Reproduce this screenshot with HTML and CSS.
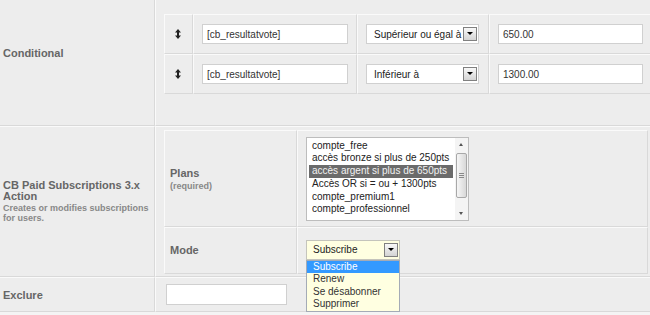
FILE: index.html
```html
<!DOCTYPE html>
<html lang="fr">
<head>
    <meta charset="UTF-8">
    <meta name="viewport" content="width=device-width, initial-scale=1.0">
    <title>CB Auto Actions</title>
    <link rel="stylesheet" href="styles.css">
</head>
<body>
    <div class="adminform">
        <div class="key key-cond">Conditional</div>
        <div class="value value-cond">
            <div class="conditions">
                <div class="cell handle">
                    <svg width="6" height="10" viewBox="0 0 6 10"><path d="M3 0 L6 3.5 H4 V6.5 H6 L3 10 L0 6.5 H2 V3.5 H0 Z" fill="#222"/></svg>
                </div>
                <div class="cell"><input class="inputbox field" type="text" value="[cb_resultatvote]"></div>
                <div class="cell"><div class="select op"><span>Supérieur ou égal à</span><i class="arrow"></i></div></div>
                <div class="cell"><input class="inputbox amount" type="text" value="650.00"></div>

                <div class="cell handle">
                    <svg width="6" height="10" viewBox="0 0 6 10"><path d="M3 0 L6 3.5 H4 V6.5 H6 L3 10 L0 6.5 H2 V3.5 H0 Z" fill="#222"/></svg>
                </div>
                <div class="cell"><input class="inputbox field" type="text" value="[cb_resultatvote]"></div>
                <div class="cell"><div class="select op"><span>Inférieur à</span><i class="arrow"></i></div></div>
                <div class="cell"><input class="inputbox amount" type="text" value="1300.00"></div>
            </div>
        </div>

        <div class="key key-action">
            <div class="title">CB Paid Subscriptions 3.x Action</div>
            <div class="desc">Creates or modifies subscriptions for users.</div>
        </div>
        <div class="value value-action">
            <div class="params">
                <div class="cell label">
                    <div class="title">Plans</div>
                    <div class="desc">(required)</div>
                </div>
                <div class="cell">
                    <div class="listbox">
                        <ul class="options">
                            <li>compte_free</li>
                            <li>accès bronze si plus de 250pts</li>
                            <li class="selected">accès argent si plus de 650pts</li>
                            <li>Accès OR si = ou + 1300pts</li>
                            <li>compte_premium1</li>
                            <li>compte_professionnel</li>
                        </ul>
                        <div class="scrollbar">
                            <div class="sb-btn up"></div>
                            <div class="sb-track"><div class="sb-thumb"></div></div>
                            <div class="sb-btn down"></div>
                        </div>
                    </div>
                </div>
                <div class="cell label">
                    <div class="title">Mode</div>
                </div>
                <div class="cell">
                    <div class="select mode">
                        <span>Subscribe</span><i class="arrow"></i>
                        <ul class="popup">
                            <li class="active">Subscribe</li>
                            <li>Renew</li>
                            <li>Se désabonner</li>
                            <li>Supprimer</li>
                        </ul>
                    </div>
                </div>
            </div>
        </div>

        <div class="key key-exclude">Exclure</div>
        <div class="value value-exclude"><input class="inputbox exclude" type="text"></div>
    </div>
</body>
</html>
```

FILE: styles.css
```css
* {
    box-sizing: border-box;
}
body {
    margin: 0;
    background-color: #f4f4f4;
    font-family: "Liberation Sans", Arial, sans-serif;
    overflow: hidden;
}
.adminform {
    display: grid;
    grid-template-columns: 155px 505px;
    grid-template-rows: 126px 151px 35px;
    width: 660px;
    background: #ededed;
}
.key {
    display: flex;
    flex-direction: column;
    justify-content: center;
    padding-left: 3px;
    border-right: 1px solid #d9d9d9;
    border-bottom: 1px solid #d9d9d9;
    color: #666;
    font-size: 11px;
    font-weight: bold;
}
.value {
    border-left: 1px solid #fafafa;
    border-bottom: 1px solid #d9d9d9;
}
.key-action, .key-exclude, .value-action, .value-exclude {
    border-top: 1px solid #fafafa;
}
.key-cond {
    justify-content: flex-start;
    padding-top: 47px;
}
.title {
    line-height: 11px;
}
.desc {
    margin-top: 1px;
    color: #888;
    font-size: 9px;
    line-height: 10px;
}
.value-cond {
    padding: 14px 0 0 8px;
}
.value-action {
    padding: 3px 0 0 8px;
}
.value-exclude {
    display: flex;
    align-items: center;
    padding-left: 10px;
}
.conditions {
    display: grid;
    grid-template-columns: 29px 164px 132px 170px;
    grid-auto-rows: 40px;
}
.params {
    display: grid;
    grid-template-columns: 133px 351px;
    grid-template-rows: 97px 47px;
}
.cell {
    display: flex;
    align-items: center;
    padding-left: 8px;
    border: 1px solid;
    border-color: #fafafa #d9d9d9 #d9d9d9 #fafafa;
}
.handle {
    justify-content: center;
    padding: 0 1px 0 0;
}
.label {
    flex-direction: column;
    align-items: flex-start;
    justify-content: center;
    padding-left: 5px;
    color: #666;
    font-size: 11px;
    font-weight: bold;
}
.label .title {
    line-height: 13px;
}
.inputbox {
    height: 20px;
    margin: 0;
    padding: 0 4px;
    border: 1px solid #d0d0d0;
    background: #fff;
    color: #333;
    font-family: "Liberation Sans", Arial, sans-serif;
    font-size: 10px;
    outline: none;
}
.field {
    width: 146px;
}
.amount {
    width: 145px;
}
.exclude {
    width: 121px;
    height: 21px;
}
.select {
    position: relative;
    display: flex;
    align-items: center;
    height: 20px;
    padding-left: 7px;
    border: 1px solid #d0d0d0;
    background: #fff;
    color: #222;
    font-size: 10px;
}
.op {
    width: 113px;
}
.mode {
    width: 94px;
    margin-top: -2px;
    padding-left: 6px;
    border-color: #c4c4bc;
    background: #ffffe1;
}
.arrow {
    position: relative;
    width: 14px;
    height: 14px;
    margin-left: auto;
    margin-right: 1px;
    border: 1px solid #808080;
    background: linear-gradient(#f8f8f8, #d4d4d4);
}
.arrow::after {
    content: "";
    position: absolute;
    left: 3px;
    top: 4px;
    border-left: 3px solid transparent;
    border-right: 3px solid transparent;
    border-top: 3px solid #000;
}
.popup {
    position: absolute;
    top: 19px;
    left: -1px;
    width: 94px;
    margin: 0;
    padding: 0;
    list-style: none;
    border: 1px solid #a4abb6;
    background: #ffffe1;
    color: #333;
    z-index: 2;
}
.popup li {
    height: 12.5px;
    line-height: 12.5px;
    padding-left: 6px;
}
.popup .active {
    background: #3399ff;
    color: #fff;
}
.listbox {
    display: flex;
    width: 163px;
    height: 84px;
    border: 1px solid #bdbdbd;
    background: #fff;
    overflow: hidden;
}
.options {
    flex: 1;
    margin: 0;
    padding: 2px 2px 0;
    list-style: none;
    color: #222;
    font-size: 10px;
}
.options li {
    height: 12.8px;
    line-height: 12.8px;
    padding-left: 3px;
    white-space: nowrap;
}
.options .selected {
    background: #6b6b6b;
    color: #f2f2f2;
}
.scrollbar {
    display: flex;
    flex-direction: column;
    width: 13px;
    background: #f4f4f4;
}
.sb-btn {
    position: relative;
    height: 13px;
}
.sb-btn::after {
    content: "";
    position: absolute;
    left: 4px;
    border-left: 2.5px solid transparent;
    border-right: 2.5px solid transparent;
}
.up::after {
    top: 5px;
    border-bottom: 3px solid #555;
}
.down::after {
    top: 5px;
    border-top: 3px solid #555;
}
.sb-track {
    flex: 1;
    padding: 2px 1px 0;
}
.sb-thumb {
    position: relative;
    height: 45px;
    border: 1px solid #a8a8a8;
    border-radius: 2px;
    background: linear-gradient(to right, #f6f6f6, #d8d8d8);
}
.sb-thumb::after {
    content: "";
    position: absolute;
    left: 2px;
    top: 19px;
    width: 5px;
    height: 5px;
    background: repeating-linear-gradient(#888 0 1px, transparent 1px 2px);
}
```
